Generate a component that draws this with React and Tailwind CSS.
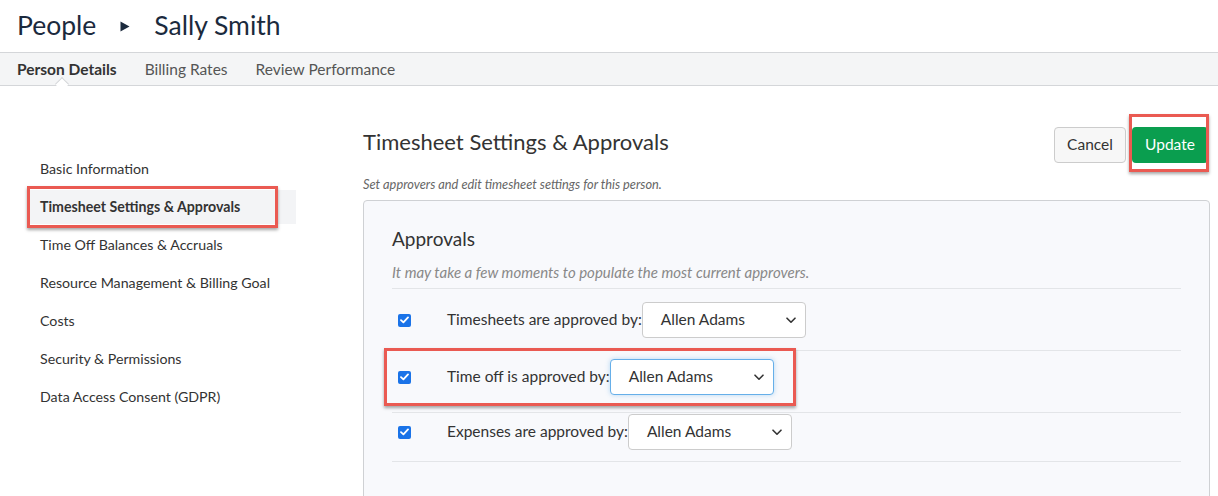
import React from "react";

const font = { fontFamily: "Lato, 'Open Sans', sans-serif" };

function Chevron() {
  return (
    <svg width="10" height="7" viewBox="0 0 10 7" className="text-[#333]">
      <path d="M1 1.2 L5 5.2 L9 1.2" fill="none" stroke="currentColor" strokeWidth="1.6" strokeLinecap="round" strokeLinejoin="round" />
    </svg>
  );
}

function Check() {
  return (
    <span className="flex h-[13px] w-[13px] items-center justify-center rounded-[2px] bg-[#1a73e8]">
      <svg width="9" height="8" viewBox="0 0 9 8">
        <path d="M1 4.2 L3.4 6.4 L8 1.4" fill="none" stroke="white" strokeWidth="1.8" strokeLinecap="round" strokeLinejoin="round" />
      </svg>
    </span>
  );
}

function Select({ focused }) {
  return (
    <div
      className={
        "ml-0 flex h-[36px] w-[164px] items-center justify-between rounded-[4px] border bg-white pl-[18px] pr-[9px] text-[15.5px] text-[#333] " +
        (focused ? "border-[#66afe9] shadow-[0_0_5px_rgba(102,175,233,0.45)]" : "border-[#cccccc]")
      }
    >
      <span>Allen Adams</span>
      <Chevron />
    </div>
  );
}

function Row({ label, focused, pt, pb, marked }) {
  return (
    <div className={"relative flex items-center border-b border-[#e3e5e8] " + pt + " " + pb}>
      <div className="flex w-[55px] justify-start pl-[6px]">
        <Check />
      </div>
      <span className="text-[15.5px] text-[#333]">{label}</span>
      <Select focused={focused} />
      {marked && (
        <div className="pointer-events-none absolute left-[-8px] top-[-3px] h-[58px] w-[412px] border-[3px] border-[#ea5a52] shadow-[0_2px_3px_rgba(0,0,0,0.35)]" />
      )}
    </div>
  );
}

const sideItems = [
  "Basic Information",
  "Timesheet Settings & Approvals",
  "Time Off Balances & Accruals",
  "Resource Management & Billing Goal",
  "Costs",
  "Security & Permissions",
  "Data Access Consent (GDPR)",
];

export default function App() {
  return (
    <div className="h-[496px] w-[1218px] overflow-hidden bg-white" style={font}>
      {/* page title */}
      <div className="flex h-[52px] items-center pl-[17px] text-[26.5px] text-[#1b2a3d]">
        <span>People</span>
        <svg width="10" height="11" viewBox="0 0 10 11" className="ml-[24px] mr-[24px]">
          <path d="M0.5 0.5 L9.5 5.5 L0.5 10.5 Z" fill="#1b2a3d" />
        </svg>
        <span>Sally Smith</span>
      </div>

      {/* tabs */}
      <div className="relative flex h-[34px] items-center border-y border-[#d4d6d9] bg-[#f4f5f6] pl-[17px] pt-[2px] text-[15.5px]">
        <span className="relative font-bold text-[#333]">
          Person Details
          <span className="absolute left-[40px] top-[21px] h-[10px] w-[10px] rotate-45 border-l border-t border-[#d4d6d9] bg-white" />
        </span>
        <span className="ml-[28px] text-[#555]">Billing Rates</span>
        <span className="ml-[28px] text-[#555]">Review Performance</span>
      </div>

      <div className="flex pl-[27px]">
        {/* side navigation */}
        <div className="mt-[66px] flex w-[269px] flex-col gap-[4px]">
          {sideItems.map((item, i) => (
            <div
              key={item}
              className={
                "relative flex h-[34px] items-center pl-[13px] text-[14.2px] " +
                (i === 1 ? "bg-[#f3f4f6] font-bold text-[#333]" : "text-[#333]")
              }
            >
              {item}
              {i === 1 && (
                <div className="pointer-events-none absolute left-0 top-[-4px] h-[42px] w-[251px] border-[3px] border-[#ea5a52] shadow-[0_2px_3px_rgba(0,0,0,0.35)]" />
              )}
            </div>
          ))}
        </div>

        {/* main panel */}
        <div className="ml-[67px] mt-[39px] w-[847px]">
          <div className="flex items-center justify-between">
            <h1 className="mb-[6px] text-[22px] text-[#333]">Timesheet Settings &amp; Approvals</h1>
            <div className="mr-[2px] flex items-center gap-[6px]">
              <button className="h-[36px] w-[72px] rounded-[4px] border border-[#cccccc] bg-[#f7f7f7] text-[15.5px] text-[#333]">
                Cancel
              </button>
              <div className="relative">
                <button className="h-[36px] w-[76px] rounded-[4px] bg-[#0a9e4f] text-[15.5px] text-white">
                  Update
                </button>
                <div className="pointer-events-none absolute left-[-3px] top-[-13px] h-[58px] w-[80px] border-[3px] border-[#ea5a52] shadow-[0_2px_3px_rgba(0,0,0,0.35)]" />
              </div>
            </div>
          </div>

          <p className="mt-[10px] text-[12.8px] leading-[20px] italic text-[#666]">
            Set approvers and edit timesheet settings for this person.
          </p>

          <div className="mt-[6px] h-[300px] rounded-[4px] border border-[#cfd1d4] bg-[#f8f9fc] px-[28px] pt-[24px]">
            <h2 className="text-[19px] leading-[28px] text-[#333]">Approvals</h2>
            <p className="mt-[8px] border-b border-[#e3e5e8] pb-[5px] text-[15px] leading-[22px] italic text-[#888]">
              It may take a few moments to populate the most current approvers.
            </p>
            <Row label="Timesheets are approved by:" pt="pt-[13px]" pb="pb-[12px]" />
            <Row label="Time off is approved by:" focused marked pt="pt-[8px]" pb="pb-[17px]" />
            <Row label="Expenses are approved by:" pt="pt-[1px]" pb="pb-[11px]" />
          </div>
        </div>
      </div>
    </div>
  );
}
